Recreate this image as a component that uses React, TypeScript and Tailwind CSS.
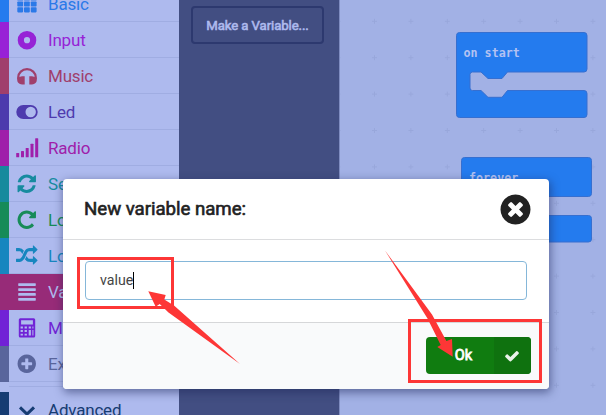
import type { ReactNode } from "react";

const REFRESH =
  "M1639 1056q0 5-1 7-64 268-268 434.5t-478 166.5q-146 0-282.5-55t-243.5-157l-129 129q-19 19-45 19t-45-19-19-45v-448q0-26 19-45t45-19h448q26 0 45 19t19 45-19 45l-137 137q71 66 161 102t187 36q134 0 250-65t186-179q11-17 53-117 8-23 30-23h192q13 0 22.5 9.5t9.5 22.5zm25-800v448q0 26-19 45t-45 19h-448q-26 0-45-19t-19-45 19-45l138-138q-148-137-349-137-134 0-250 65t-186 179q-11 17-53 117-8 23-30 23h-199q-13 0-22.5-9.5t-9.5-22.5v-7q65-268 270-434.5t480-166.5q146 0 284 55.5t245 156.5l130-129q19-19 45-19t45 19 19 45z";
const REPEAT =
  "M1664 256v448q0 26-19 45t-45 19h-448q-42 0-59-40-17-39 14-69l138-138q-148-137-349-137-104 0-198.5 40.5t-163.5 109.5-109.5 163.5-40.5 198.5 40.5 198.5 109.5 163.5 163.5 109.5 198.5 40.5q119 0 225-52t179-147q7-10 23-12 15 0 25 9l137 138q9 8 9.5 20.5t-7.5 22.5q-109 132-264 204.5t-327 72.5q-156 0-298-61t-245-164-164-245-61-298 61-298 164-245 245-164 298-61q147 0 284.5 55.5t244.5 156.5l130-129q29-31 70-14 39 17 39 59z";
const RANDOM =
  "M666 481q-60 92-137 273-22-45-37-72.5t-40.5-63.5-51-56.5-63-35-81.5-14.5h-224q-14 0-23-9t-9-23v-192q0-14 9-23t23-9h224q250 0 410 225zm1126 799q0 14-9 23l-320 320q-9 9-23 9-13 0-22.5-9.5t-9.5-22.5v-192q-32 0-85 .5t-81 1-73-1-71-5-64-10.5-63-18.5-58-28.5-59-40-55-53.5-56-69.5q59-93 136-273 22 45 37 72.5t40.5 63.5 51 56.5 63 35 81.5 14.5h256v-192q0-14 9-23t23-9q12 0 24 10l319 319q9 9 9 23zm0-896q0 14-9 23l-320 320q-9 9-23 9-13 0-22.5-9.5t-9.5-22.5v-192h-256q-48 0-87 15t-69 45-51 61.5-45 77.5q-32 62-78 171-29 66-49.5 111t-54 105-64 100-74 83-90 68.5-106.5 42-128 16.5h-224q-14 0-23-9t-9-23v-192q0-14 9-23t23-9h224q48 0 87-15t69-45 51-61.5 45-77.5q32-62 78-171 29-66 49.5-111t54-105 64-100 74-83 90-68.5 106.5-42 128-16.5h256v-192q0-14 9-23t23-9q12 0 24 10l319 319q9 9 9 23z";
const CHECK =
  "M1671 566q0 40-28 68l-724 724-136 136q-28 28-68 28t-68-28l-136-136-362-362q-28-28-28-68t28-68l136-136q28-28 68-28t68 28l294 295 656-657q28-28 68-28t68 28l136 136q28 28 28 68z";
const PLUS_CIRCLE =
  "M1344 960v-128q0-26-19-45t-45-19h-256v-256q0-26-19-45t-45-19h-128q-26 0-45 19t-19 45v256h-256q-26 0-45 19t-19 45v128q0 26 19 45t45 19h256v256q0 26 19 45t45 19h128q26 0 45-19t19-45v-256h256q26 0 45-19t19-45zm320-64q0 209-103 385.5t-279.5 279.5-385.5 103-385.5-103-279.5-279.5-103-385.5 103-385.5 279.5-279.5 385.5-103 385.5 103 279.5 279.5 103 385.5z";
const TIMES_CIRCLE =
  "M1277 1122q0-26-19-45l-181-181 181-181q19-19 19-45 0-27-19-46l-90-90q-19-19-46-19-26 0-45 19l-181 181-181-181q-19-19-45-19-27 0-46 19l-90 90q-19 19-19 46 0 26 19 45l181 181-181 181q-19 19-19 45 0 27 19 46l90 90q19 19 46 19 26 0 45-19l181-181 181 181q19 19 45 19 27 0 46-19l90-90q19-19 19-46zm387-226q0 209-103 385.5t-279.5 279.5-385.5 103-385.5-103-279.5-279.5-103-385.5 103-385.5 279.5-279.5 385.5-103 385.5 103 279.5 279.5 103 385.5z";

function Glyph({ d, className }: { d: string; className: string }) {
  return (
    <svg viewBox="0 0 1792 1792" fill="currentColor" className={className}>
      <path d={d} />
    </svg>
  );
}

function Icon({ children }: { children: ReactNode }) {
  return (
    <svg viewBox="0 0 24 24" fill="currentColor" className="size-6 shrink-0">
      {children}
    </svg>
  );
}

const gridIcon = (
  <Icon>
    {[3.4, 9.4, 15.3].map((y) =>
      [2.3, 9, 15.8].map((x) => <rect key={`${x}-${y}`} x={x} y={y} width="5.800" height="5.100" rx="0.8" />)
    )}
  </Icon>
);
const circleIcon = (
  <Icon>
    <circle cx="12" cy="12.200" r="6.200" fill="none" stroke="currentColor" strokeWidth="6.200" />
  </Icon>
);
const headphonesIcon = (
  <Icon>
    <path d="M3.200 15.500v-2a8.800 8.300 0 0 1 17.600 0v2" fill="none" stroke="currentColor" strokeWidth="2.200" />
    <path d="M9.700 12.200v8.400H7C4 20.400 2.200 18.300 2.200 16c0-2.200 2-3.200 4.200-3.500l.2-.3zM14.300 12.200v8.400H17c3-.2 4.800-2.300 4.800-4.600 0-2.200-2-3.200-4.200-3.500l-.2-.3z" />
  </Icon>
);
const toggleIcon = (
  <Icon>
    <path
      fillRule="evenodd"
      d="M8.300 5h7.400a7 7 0 0 1 0 14H8.300a7 7 0 0 1 0-14zM15.700 6.800a5.200 5.200 0 1 0 0 10.400 5.200 5.200 0 0 0 0-10.400z"
    />
  </Icon>
);
const signalIcon = (
  <Icon>
    <rect x="1.200" y="17" width="3" height="4.300" rx=".5" />
    <rect x="6" y="15" width="3" height="6.300" rx=".5" />
    <rect x="10.700" y="12" width="3" height="9.300" rx=".5" />
    <rect x="15.500" y="7.800" width="3" height="13.500" rx=".5" />
    <rect x="20.200" y="2.200" width="3" height="19.100" rx=".5" />
  </Icon>
);
const linesIcon = (
  <Icon>
    {[3.2, 8.2, 13.1, 18].map((y) => (
      <rect key={y} x="3.200" y={y} width="17.600" height="2.700" rx=".6" />
    ))}
  </Icon>
);
const calculatorIcon = (
  <Icon>
    <path
      fillRule="evenodd"
      d="M5.300 2.300h13.400a1.500 1.500 0 0 1 1.500 1.500v16.300a1.500 1.500 0 0 1-1.500 1.500H5.300a1.500 1.500 0 0 1-1.500-1.500V3.800a1.500 1.500 0 0 1 1.500-1.500zM6.100 4.200v4.300h11.800V4.200zM5.600 10.600v1.900h2.300v-1.900zm4 0v1.900h2.300v-1.900zm4.100 0v1.900h2.200v-1.900zm3.700 0v1.900h1v-1.900zM5.600 14.100v1.900h2.300v-1.900zm4 0v1.900h2.300v-1.900zM5.600 17.700v1.900h2.300v-1.900zm4 0v1.900h2.300v-1.900zm4.100-3.600v5.500h2.200v-5.500zm3.700 0v5.500h1v-5.500z"
    />
  </Icon>
);
const chevronIcon = (
  <Icon>
    <path d="M5 9.300l7 6.800 7-6.800" fill="none" stroke="currentColor" strokeWidth="3" />
  </Icon>
);
const glyphIcon = (d: string) => (
  <span className="flex size-6 shrink-0 items-center justify-center">
    <Glyph d={d} className="size-[21.500px]" />
  </span>
);

const categories = [
  { name: "Basic", icon: gridIcon, text: "text-[#2b79e8]", bar: "bg-[#247bee]" },
  { name: "Input", icon: circleIcon, text: "text-[#9623d6]", bar: "bg-[#9821d6]" },
  { name: "Music", icon: headphonesIcon, text: "text-[#a03f6c]", bar: "bg-[#a03f6c]" },
  { name: "Led", icon: toggleIcon, text: "text-[#4e3bae]", bar: "bg-[#4c3aad]" },
  { name: "Radio", icon: signalIcon, text: "text-[#9f20aa]", bar: "bg-[#9f20aa]" },
  { name: "Servos", icon: glyphIcon(REFRESH), text: "text-[#178b9f]", bar: "bg-[#178a9d]" },
  { name: "Loops", icon: glyphIcon(REPEAT), text: "text-[#178b58]", bar: "bg-[#178b58]" },
  { name: "Logic", icon: glyphIcon(RANDOM), text: "text-[#1786bf]", bar: "bg-[#1786bf]" },
  { name: "Variables", icon: linesIcon, text: "text-[#aebaee]", bar: "bg-[#972b78]", active: true },
  { name: "Math", icon: calculatorIcon, text: "text-[#7123d6]", bar: "bg-[#7121d6]" },
  { name: "Extensions", icon: glyphIcon(PLUS_CIRCLE), text: "text-[#59659c]", bar: "bg-[#59659c]" },
];

function Toolbox() {
  return (
    <aside className="-mt-[14px] flex h-[442px] w-[179px] shrink-0 flex-col overflow-hidden bg-[#aebaee] text-[17px] tracking-[-0.200px]">
      {categories.map((c) => (
        <div key={c.name} className={`flex h-9 shrink-0 ${c.text} ${c.active ? "bg-[#972b78]" : ""}`}>
          <div className={`w-[9px] ${c.bar}`} />
          <div
            className={`flex flex-1 items-center gap-[9px] border-b pl-[6px] ${c.active ? "border-[#972b78]" : "border-[#a0ade2]"}`}
          >
            {c.icon}
            <span className="pt-[2px]">{c.name}</span>
          </div>
        </div>
      ))}
      <div className="mt-1 ml-[9px] h-px shrink-0 bg-[#a0ade2]" />
      <div className="mt-[5px] flex h-9 shrink-0 text-[#163c73]">
        <div className="w-[9px] bg-[#163c73]" />
        <div className="flex items-center gap-[9px] pl-[6px]">
          {chevronIcon}
          <span className="pt-px">Advanced</span>
        </div>
      </div>
    </aside>
  );
}

function Workspace() {
  return (
    <svg width="267" height="415" viewBox="339 0 267 415" className="shrink-0 bg-[#a2b1e5]">
      <defs>
        <pattern id="grid" x="429.100" y="3.100" width="36.400" height="36.400" patternUnits="userSpaceOnUse">
          <path d="M15.700 18.200h5M18.200 15.700v5" stroke="#98a7db" strokeWidth="1" />
        </pattern>
      </defs>
      <rect x="339" width="267" height="415" fill="url(#grid)" />
      <path d="M339.500 0v415" stroke="#7f8cc0" />
      <g fill="#247bee" stroke="#366fd0" strokeWidth="1">
        <path d="M459.500 32.500H584a3 3 0 0 1 3 3V69a3 3 0 0 1-3 3h-76.500l-5.500 6.500h-14L481 72h-8.500a2.500 2.500 0 0 0-2.500 2.500V88a2.500 2.500 0 0 0 2.500 2.500H481l7 6.800h14l5.500-6.800H584a3 3 0 0 1 3 3v21a3 3 0 0 1-3 3H459.500a3 3 0 0 1-3-3v-79a3 3 0 0 1 3-3z" />
        <path d="M464.500 157.500H588.500a3 3 0 0 1 3 3V193.500a3 3 0 0 1-3 3H475V215.500H588.500a3 3 0 0 1 3 3V239a3 3 0 0 1-3 3H464.500a3 3 0 0 1-3-3V160.500a3 3 0 0 1 3-3z" />
      </g>
      <g fill="#b3c2f2" className="font-['DejaVu_Sans_Mono',monospace] text-[11.700px] font-bold">
        <text x="463.500" y="57">on start</text>
        <text x="469" y="182">forever</text>
      </g>
    </svg>
  );
}

function VariableDialog() {
  return (
    <div className="absolute top-[179px] left-[63px] flex h-[210px] w-[486px] flex-col overflow-hidden rounded-[4px] bg-white shadow-[1px_3px_8px_1px_rgba(30,40,90,0.500)]">
      <header className="flex h-[61px] shrink-0 items-center justify-between border-b border-[#dcdddf] pr-4 pl-[21px] text-[#222]">
        <h1 className="pt-px text-[18.700px] font-normal tracking-[-0.050px] [-webkit-text-stroke:0.600px_#222]">
          New variable name:
        </h1>
        <Glyph d={TIMES_CIRCLE} className="size-[35px]" />
      </header>
      <div className="flex-1 px-[22px] pt-[21px]">
        <div className="flex h-[39px] items-center rounded-[4px] border border-[#85b7d9] pl-[14px] text-[14.200px] text-[#444]">
          <span>value</span>
          <span className="h-[17px] w-px bg-black" />
        </div>
      </div>
      <footer className="flex h-[67px] shrink-0 items-start justify-end border-t border-[#d6d7d9] bg-[#f9fafb] pt-[14px] pr-[18px]">
        <button className="flex h-[37px] w-[105px] overflow-hidden rounded-[4px] bg-[#107c10] text-[14.500px] text-white">
          <span className="flex h-full w-[68px] items-center justify-center pt-px pl-[7px] [-webkit-text-stroke:0.800px_#fff]">
            Ok
          </span>
          <span className="flex h-full flex-1 items-center justify-center bg-[#0f720f] pr-px text-[#e9f2e9]">
            <Glyph d={CHECK} className="size-4" />
          </span>
        </button>
      </footer>
    </div>
  );
}

function Annotations() {
  return (
    <svg width="606" height="415" viewBox="0 0 606 415" className="absolute inset-0">
      <g fill="none" stroke="#fd3636" strokeWidth="3">
        <rect x="78.500" y="258.500" width="94" height="49" />
        <rect x="409.500" y="320.500" width="131" height="61" />
      </g>
      <g fill="#fd3636">
        <path d="M148.300 291.300L165.700 295l-1.400 4.500L174 305.500 240 364 168.500 312.500 159.700 304l-4 2.700z" />
        <path d="M452.700 356.700L452 339l-5.600 2L432 314.500 385 250.500l42.500 68L440.700 345l-3.400 2z" />
      </g>
    </svg>
  );
}

export default function App() {
  return (
    <main className="relative flex h-[415px] w-[606px] overflow-hidden bg-[#a2b1e5] font-[Roboto,sans-serif]">
      <Toolbox />
      <section className="flex w-[160px] shrink-0 items-start bg-[#424e82] pt-[6px] pl-[12px]">
        <button className="h-[38px] w-[133px] rounded-[4px] border-2 border-[#2d396f] pt-px text-[13.200px] tracking-[-0.100px] text-[#aebaee] [-webkit-text-stroke:0.600px_#aebaee]">
          Make a Variable...
        </button>
      </section>
      <Workspace />
      <VariableDialog />
      <Annotations />
    </main>
  );
}
